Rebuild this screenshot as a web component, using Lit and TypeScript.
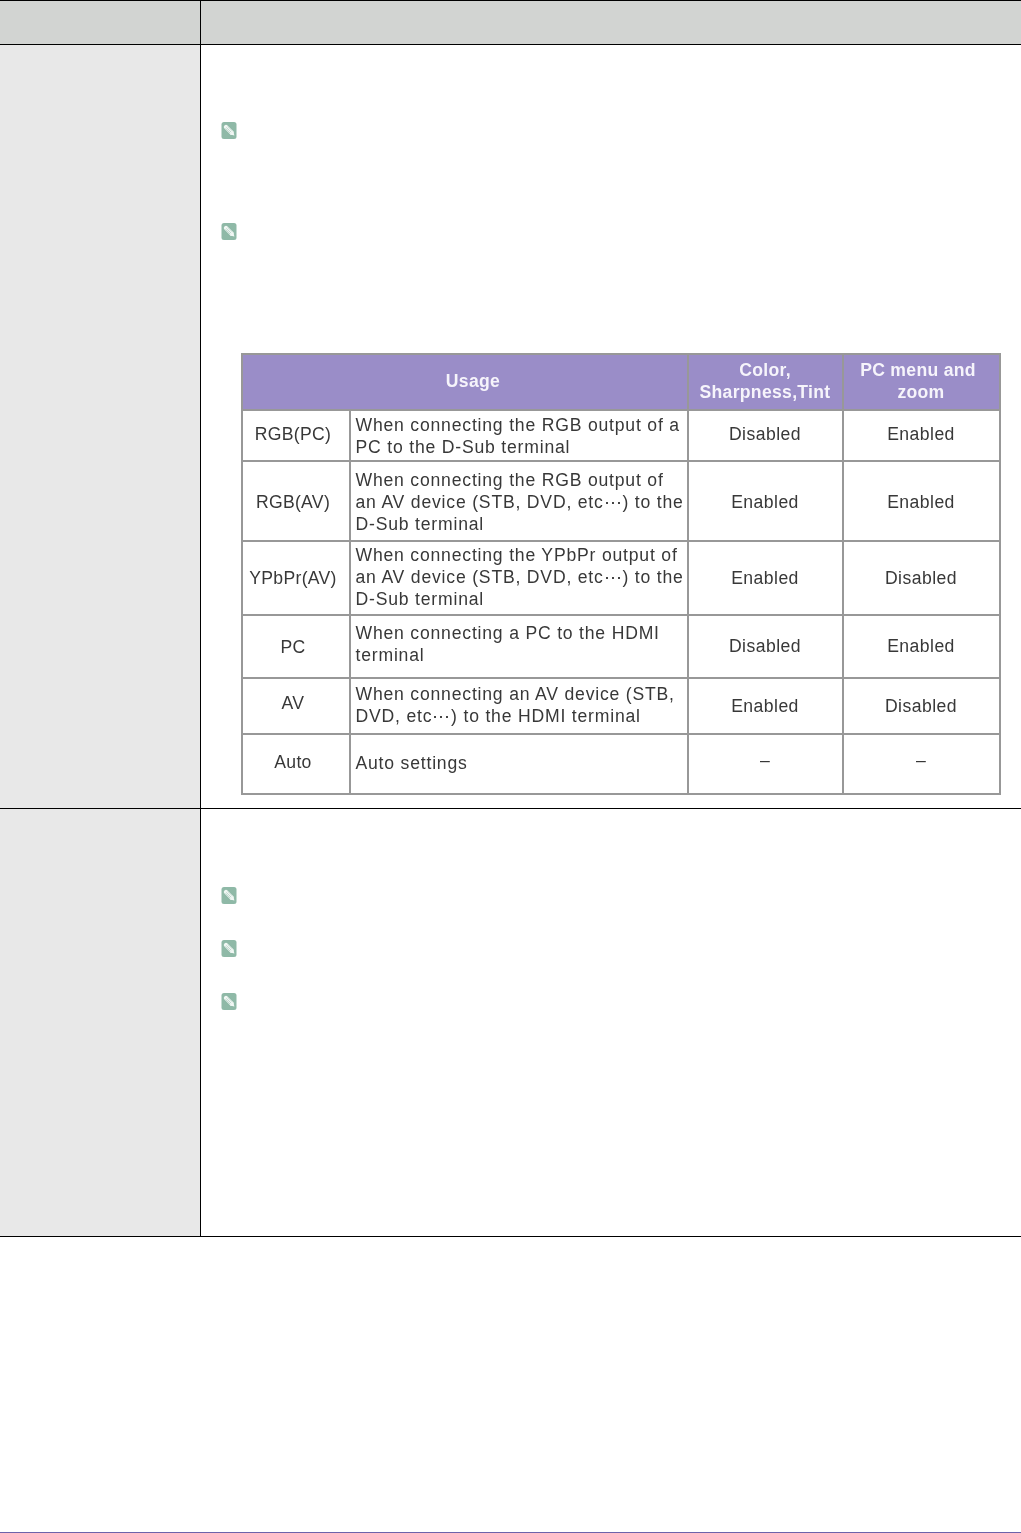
import { LitElement, html, css, svg } from "lit";
import { customElement } from "lit/decorators.js";

const pencil = html`<svg class="note" width="16" height="17" viewBox="0 0 16 17" aria-hidden="true">
  <rect x="0.5" y="0" width="15" height="17" rx="2.5" fill="#8fb9a7"/>
  ${svg`<path d="M5 5 L10.4 10.4" stroke="#f1f7f4" stroke-width="4.4" stroke-linecap="round" fill="none"/>
  <path d="M8.8 12.4 L12.2 9 L13.4 13.6 Z" fill="#f1f7f4"/>
  <path d="M4.4 6.6 L9.2 11.2 M5.2 5.4 L10.2 10.2 M6.6 4.2 L11.4 8.8" stroke="#a9c9bb" stroke-width=".7" fill="none"/>`}
</svg>`;

type Row = {
  name: string;
  lines: string[];
  a: string;
  b: string;
  h: number;
  /* vertical nudge of each cell's text: positive lifts it, negative lowers it */
  np: number;
  up: number;
  vp: number;
};
const rows: Row[] = [
  { name: "RGB(PC)", lines: ["When connecting the RGB output of a", "PC to the D-Sub terminal"], a: "Disabled", b: "Enabled", h: 51, np: 4, up: 0, vp: 4 },
  { name: "RGB(AV)", lines: ["When connecting the RGB output of", "an AV device (STB, DVD, etc\u22EF) to the", "D-Sub terminal"], a: "Enabled", b: "Enabled", h: 80, np: -2, up: -2, vp: -2 },
  { name: "YPbPr(AV)", lines: ["When connecting the YPbPr output of", "an AV device (STB, DVD, etc\u22EF) to the", "D-Sub terminal"], a: "Enabled", b: "Disabled", h: 74, np: 0, up: 2, vp: 0 },
  { name: "PC", lines: ["When connecting a PC to the HDMI", "terminal"], a: "Disabled", b: "Enabled", h: 63, np: 0, up: 6, vp: 2 },
  { name: "AV", lines: ["When connecting an AV device (STB,", "DVD, etc\u22EF) to the HDMI terminal"], a: "Enabled", b: "Disabled", h: 56, np: 6, up: 2, vp: 0 },
  { name: "Auto", lines: ["Auto settings"], a: "\u2013", b: "\u2013", h: 60, np: 4, up: 2, vp: 8 },
];

const nudge = (n: number) => (n >= 0 ? `padding-bottom:${n}px` : `padding-top:${-n}px`);

@customElement("app-root")
export class AppRoot extends LitElement {
  static styles = css`
    :host {
      display: flex;
      flex-direction: column;
      height: 1533px;
      background: #fff;
      font-family: "Liberation Sans", Arial, sans-serif;
      overflow: hidden;
    }
    .sheet {
      display: grid;
      grid-template-columns: 201px 820px;
      grid-template-rows: 44px 764px 428px;
      border-top: 1px solid #000;
    }
    .cell { box-sizing: border-box; border-bottom: 1px solid #000; }
    .side { border-right: 1px solid #000; background: #e8e8e8; }
    .head { background: #d2d4d2; }
    .body { padding-left: 20px; display: flex; flex-direction: column; align-items: flex-start; }
    .r1 { padding-top: 77px; }
    .r2 { padding-top: 78px; }
    .note { display: block; flex: none; }
    .gap-84 { margin-top: 84px; }
    .gap-36 { margin-top: 36px; }
    table {
      border-collapse: collapse;
      table-layout: fixed;
      width: 758px;
      margin: 113px 0 0 19.5px;
      color: #383838;
      font-size: 17.6px;
      line-height: 22px;
      letter-spacing: 0.45px;
      filter: blur(0.5px);
    }
    th, td {
      border: 2px solid #989898;
      padding: 0;
      text-align: center;
      vertical-align: middle;
      font-weight: 400;
    }
    th {
      box-sizing: border-box;
      background: #9a8dc8;
      color: #f6f4fb;
      font-weight: 700;
      height: 56px;
      padding-bottom: 2px;
      letter-spacing: 0.3px;
    }
    th.usage-head { padding-left: 17px; }
    .first { padding-right: 6px; }
    td.name { padding-right: 5px; letter-spacing: 0.3px; }
    td.usage { text-align: left; padding-left: 5px; white-space: nowrap; letter-spacing: 0.8px; }
    .line { display: block; }
    .foot { margin-top: auto; height: 1px; background: #6c62aa; flex: none; }
  `;

  render() {
    return html`
      <div class="sheet">
        <div class="cell side head"></div>
        <div class="cell head"></div>
        <div class="cell side"></div>
        <div class="cell body r1">
          ${pencil}
          <div class="gap-84">${pencil}</div>
          <table>
            <colgroup><col style="width:108px" /><col style="width:338px" /><col style="width:155px" /><col style="width:157px" /></colgroup>
            <tr>
              <th colspan="2" class="usage-head">Usage</th>
              <th>Color,<br />Sharpness,Tint</th>
              <th><span class="first">PC menu and</span><br />zoom</th>
            </tr>
            ${rows.map(
              (r) => html`<tr style="height:${r.h}px">
                <td class="name" style=${nudge(r.np)}>${r.name}</td>
                <td class="usage" style=${nudge(r.up)}>${r.lines.map((l) => html`<span class="line">${l}</span>`)}</td>
                <td style=${nudge(r.vp)}>${r.a}</td>
                <td style=${nudge(r.vp)}>${r.b}</td>
              </tr>`
            )}
          </table>
        </div>
        <div class="cell side"></div>
        <div class="cell body r2">
          ${pencil}
          <div class="gap-36">${pencil}</div>
          <div class="gap-36">${pencil}</div>
        </div>
      </div>
      <div class="foot"></div>
    `;
  }
}
